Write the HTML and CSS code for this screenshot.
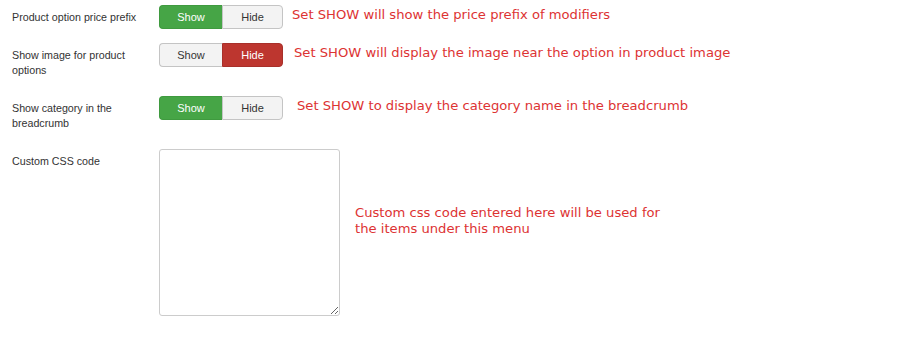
FILE: index.html
```html
<!DOCTYPE html>
<html lang="en">
  <head>
    <meta charset="UTF-8" />
    <meta name="viewport" content="width=device-width, initial-scale=1.0" />
    <title>Menu options</title>
    <link rel="stylesheet" href="styles.css">
  </head>
  <body>
    <form class="options">
      <div class="option-row">
        <label class="option-label">Product option price prefix</label>
        <div class="toggle">
          <button type="button" class="toggle-btn on">Show</button>
          <button type="button" class="toggle-btn">Hide</button>
        </div>
        <p class="note">Set SHOW will show the price prefix of modifiers</p>
      </div>

      <div class="option-row">
        <label class="option-label">Show image for product options</label>
        <div class="toggle">
          <button type="button" class="toggle-btn">Show</button>
          <button type="button" class="toggle-btn off">Hide</button>
        </div>
        <p class="note note-mid">Set SHOW will display the image near the option in product image</p>
      </div>

      <div class="option-row">
        <label class="option-label">Show category in the breadcrumb</label>
        <div class="toggle">
          <button type="button" class="toggle-btn on">Show</button>
          <button type="button" class="toggle-btn">Hide</button>
        </div>
        <p class="note note-far">Set SHOW to display the category name in the breadcrumb</p>
      </div>

      <div class="option-row last">
        <label class="option-label">Custom CSS code</label>
        <textarea class="css-box"></textarea>
        <p class="note note-block">Custom css code entered here will be used for the items under this menu</p>
      </div>
    </form>
  </body>
</html>
```

FILE: styles.css
```css
* {
  margin: 0;
  padding: 0;
  box-sizing: border-box;
}

body {
  font-family: "Liberation Sans", Arial, sans-serif;
  font-size: 10.7px;
  color: #333;
  background: #fff;
  padding: 5px 0 0 12px;
}

.option-row {
  display: flex;
  align-items: flex-start;
  margin-bottom: 14px;
}

.option-label {
  width: 147px;
  padding: 5px 10px 4px 0;
  line-height: 15px;
}

.toggle {
  display: flex;
  height: 24px;
  flex-shrink: 0;
}

.toggle-btn {
  font-family: "Liberation Sans", Arial, sans-serif;
  font-size: 11px;
  color: #333;
  background: #f3f3f3;
  border: 1px solid #c4c4c4;
  width: 62px;
  height: 24px;
  cursor: pointer;
}

.toggle-btn:first-child {
  width: 63px;
  border-radius: 4px 0 0 4px;
  border-right: none;
}

.toggle-btn:last-child {
  width: 61px;
  border-radius: 0 4px 4px 0;
}

.toggle-btn.on {
  background: #46a546;
  border-color: #3f9a3f;
  color: #fff;
}

.toggle-btn.off {
  background: #bd362f;
  border-color: #a8302a;
  color: #fff;
}

.note {
  font-family: "DejaVu Sans", Verdana, sans-serif;
  font-size: 13.15px;
  color: #dd3333;
  margin-left: 9px;
  line-height: 16px;
  margin-top: 2px;
}

.note-mid {
  margin-left: 11px;
}

.note-far {
  margin-left: 14px;
}

.css-box {
  width: 181px;
  height: 167px;
  border: 1px solid #ccc;
  border-radius: 3px;
  flex-shrink: 0;
}

.note-block {
  max-width: 320px;
  margin-left: 15px;
  margin-top: 56px;
}
```
